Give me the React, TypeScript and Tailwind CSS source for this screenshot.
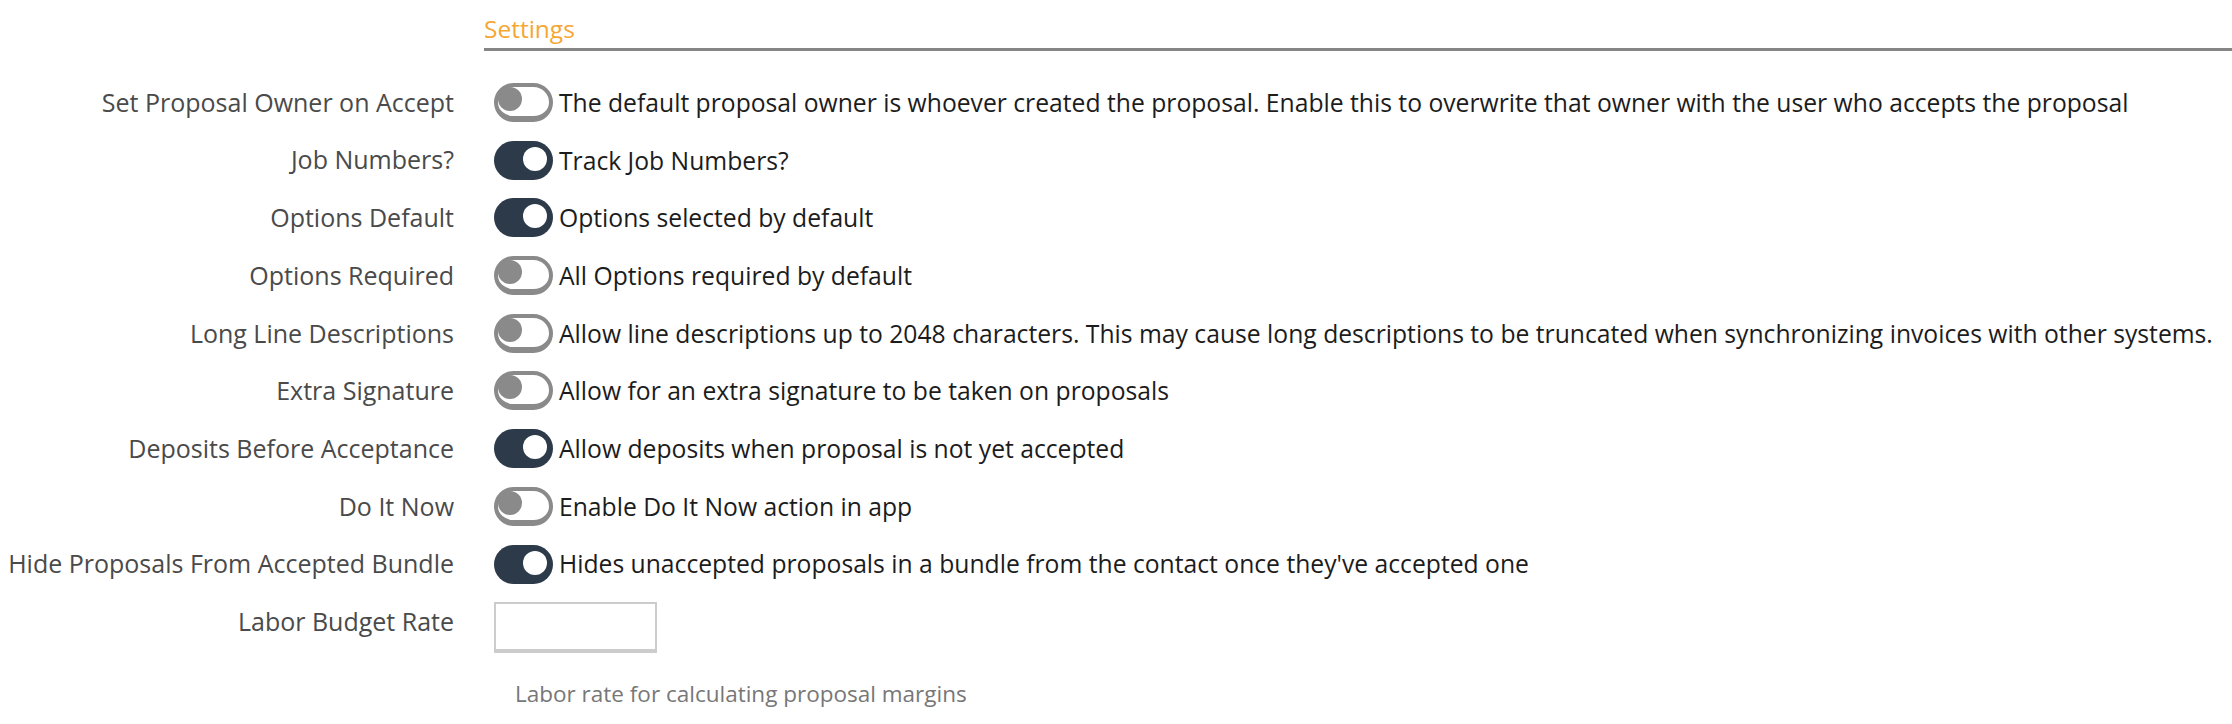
import React from 'react';

type Row = { label: string; on: boolean; text: string };

const rows: Row[] = [
  { label: 'Set Proposal Owner on Accept', on: false, text: 'The default proposal owner is whoever created the proposal. Enable this to overwrite that owner with the user who accepts the proposal' },
  { label: 'Job Numbers?', on: true, text: 'Track Job Numbers?' },
  { label: 'Options Default', on: true, text: 'Options selected by default' },
  { label: 'Options Required', on: false, text: 'All Options required by default' },
  { label: 'Long Line Descriptions', on: false, text: 'Allow line descriptions up to 2048 characters. This may cause long descriptions to be truncated when synchronizing invoices with other systems.' },
  { label: 'Extra Signature', on: false, text: 'Allow for an extra signature to be taken on proposals' },
  { label: 'Deposits Before Acceptance', on: true, text: 'Allow deposits when proposal is not yet accepted' },
  { label: 'Do It Now', on: false, text: 'Enable Do It Now action in app' },
  { label: 'Hide Proposals From Accepted Bundle', on: true, text: "Hides unaccepted proposals in a bundle from the contact once they've accepted one" },
];

function Toggle({ on }: { on: boolean }) {
  if (on) {
    return (
      <div className="relative w-[59px] h-[39px] shrink-0 rounded-full bg-[#2c3a4a]">
        <div className="absolute right-[6px] top-[6px] w-[24px] h-[24px] rounded-full bg-white" />
      </div>
    );
  }
  return (
    <div className="relative w-[59px] h-[39px] shrink-0 rounded-full border-[4px] border-b-[6px] border-[#8a8a8a] bg-white">
      <div className="absolute left-0 top-0 w-[24px] h-[24px] rounded-full bg-[#8a8a8a]" />
    </div>
  );
}

export default function App() {
  return (
    <div className="w-[2232px] h-[724px] bg-white font-['Open_Sans',sans-serif] text-[24.7px] overflow-hidden">
      <div className="grid grid-cols-[454px_1fr] gap-x-[30px]">
        <div />
        <div className="h-[51px] pt-[12px] border-b-[3px] border-[#858585]">
          <div className="leading-[33px] text-[#f5a733] text-[24.5px]">Settings</div>
        </div>
      </div>

      <div className="mt-[32px] flex flex-col">
        {rows.map((r) => (
          <div key={r.label} className="grid grid-cols-[454px_1fr] gap-x-[30px] h-[57.7px]">
            <div className="h-[39px] flex items-center justify-end text-[25px] text-[#4a4a4a] whitespace-nowrap">{r.label}</div>
            <div className="pl-[10px] h-[39px] flex items-center gap-[6px]">
              <Toggle on={r.on} />
              <span className="text-[#1c1c1c] whitespace-nowrap">{r.text}</span>
            </div>
          </div>
        ))}

        <div className="grid grid-cols-[454px_1fr] gap-x-[30px]">
          <div className="h-[39px] flex items-center justify-end text-[25px] text-[#4a4a4a]">Labor Budget Rate</div>
          <div className="pl-[10px]">
            <input
              type="text"
              className="block w-[163px] h-[51px] border-[2px] border-b-[4px] border-[#cccccc] outline-none bg-white"
            />
            <div className="mt-[26px] pl-[21px] text-[22.5px] leading-[30px] text-[#777777]">Labor rate for calculating proposal margins</div>
          </div>
        </div>
      </div>
    </div>
  );
}
